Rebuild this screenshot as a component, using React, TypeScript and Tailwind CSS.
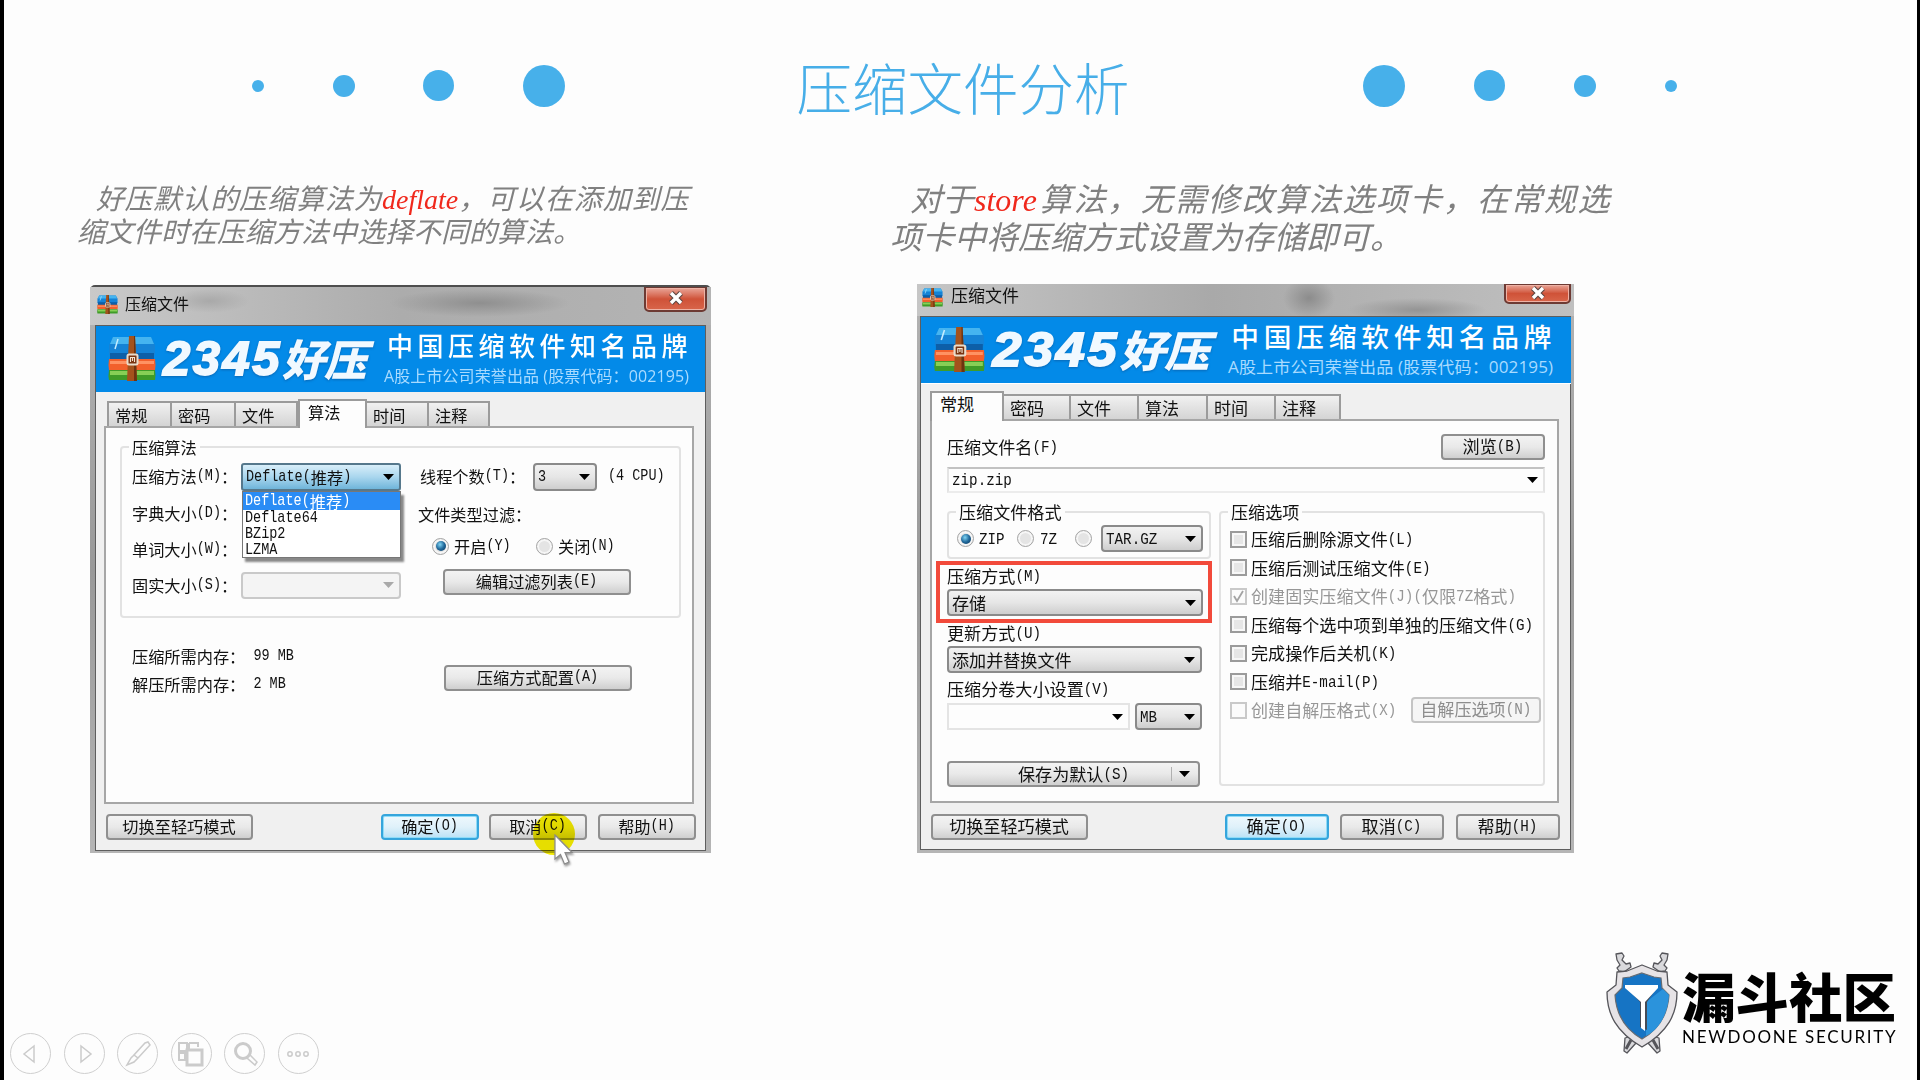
import React from "react";

const CJK = "font-['Liberation_Sans','Noto_Sans_CJK_SC',sans-serif]";

/** Dialog label: full-width glyphs at 1em, half-width glyphs at exactly 0.5em. */
function T({ children, className = "" }: { children: string; className?: string }) {
  const runs = children.match(/[\x20-\x7e]+|[^\x20-\x7e]+/g) ?? [];
  return (
    <span className={`inline-flex shrink-0 items-center whitespace-pre leading-[18px] ${className}`}>
      {runs.map((r, i) =>
        /^[\x20-\x7e]/.test(r) ? (
          <span key={i} className="inline-block scale-y-[1.2] font-['Liberation_Mono',monospace] text-[0.8333em] leading-[18px]">
            {r}
          </span>
        ) : (
          <span key={i} className="font-['Noto_Sans_CJK_SC',sans-serif] leading-[18px]">
            {r}
          </span>
        )
      )}
    </span>
  );
}

function Arrow({ className = "text-black" }: { className?: string }) {
  return (
    <svg className={`h-[6px] w-[11px] shrink-0 ${className}`} viewBox="0 0 11 6">
      <path d="M0 0H11L5.5 6Z" fill="currentColor" />
    </svg>
  );
}

function Btn({ children, className = "", primary = false, disabled = false }: { children: string; className?: string; primary?: boolean; disabled?: boolean }) {
  const look = primary
    ? "border-2 border-[#35a5dc] bg-linear-to-b from-[#eef8fd] via-[#dff1fa] to-[#b9e2f6] shadow-[inset_0_0_0_1px_#8fdcf8]"
    : disabled
      ? "border-2 border-[#c4c4c4] bg-[#f5f5f5] text-[#8d8d8d]"
      : "border-2 border-[#8f8f8f] bg-linear-to-b from-[#f3f3f3] via-[#e9e9e9] to-[#cfcfcf]";
  return (
    <div className={`flex shrink-0 items-center justify-center rounded-[4px] ${look} ${className}`}>
      <T className="-mt-[2px] -ml-[1px]">{children}</T>
    </div>
  );
}

function Combo({ children = "", className = "" }: { children?: string; className?: string }) {
  return (
    <div className={`flex shrink-0 items-center justify-between rounded-[4px] border-2 border-[#8a8a8a] bg-linear-to-b from-[#f2f2f2] via-[#e6e6e6] to-[#cecece] pr-[5px] pl-[3px] ${className}`}>
      <T>{children}</T>
      <Arrow />
    </div>
  );
}

function Radio({ on = false, className = "" }: { on?: boolean; className?: string }) {
  return (
    <span className={`flex size-[17px] shrink-0 items-center justify-center rounded-full border-[1.5px] border-[#a5a5a5] bg-[#e4e4e4] shadow-[inset_0_0_0_2px_#f6f6f6] ${className}`}>
      {on && <span className="size-[10px] rounded-full bg-radial-[at_40%_35%] from-[#7fd4f4] via-[#21699b] to-[#0b3358]" />}
    </span>
  );
}

function Archive({ className }: { className: string }) {
  return (
    <svg className={className} viewBox="0 0 48 45" preserveAspectRatio="none">
      <path d="M5 1H43L47 9V19H1V9Z" fill="#1583d6" />
      <path d="M5 1H43L46 8H2Z" fill="#45b4f0" />
      <path d="M2 17H46V25H2Z" fill="#0d5fa8" />
      <path d="M1 23Q0 29 1 34H47Q48 29 47 23Z" fill="#f2602c" />
      <path d="M2 25H46V28H2Z" fill="#ff9263" />
      <path d="M1 34Q0 40 1 44H47Q48 39 47 34Z" fill="#3f9c28" />
      <path d="M2 35H46V39H2Z" fill="#87cf55" />
      <path d="M21 0H27L29 45H19Z" fill="#a4521c" />
      <path d="M26 0H27L29 45H26Z" fill="#6d3410" />
      <rect x="19.5" y="18.5" width="10" height="10" rx="1.5" fill="#7a3310" stroke="#e9dccb" strokeWidth="2" />
      <path d="M22.500 26V21.500H26.500V26M24.500 21.500V25" stroke="#f3e3cf" strokeWidth="1.100" fill="none" />
      <path d="M10 3L7 13" stroke="#c6ecff" strokeWidth="1.500" />
    </svg>
  );
}

function Banner({ className = "" }: { className?: string }) {
  return (
    <div className={`flex h-[66px] w-[609px] shrink-0 origin-left bg-[#038ae8] ${className}`}>
      <Archive className="mt-[10px] ml-[12px] h-[45px] w-[48px] shrink-0" />
      <div className="mt-[6px] ml-[7px] flex h-[52px] w-[216px] shrink-0 items-center whitespace-nowrap text-[#f1f9ff] italic drop-shadow-[0_1px_1px_#0867b5]">
        <span className="font-['Liberation_Sans',sans-serif] text-[49px] leading-[52px] font-bold tracking-[2.500px] [-webkit-text-stroke:1.8px_#f1f9ff]">2345</span>
        <span className="-mt-[2px] font-['Noto_Sans_CJK_SC',sans-serif] text-[43px] leading-[52px] font-black tracking-[-1px]">好压</span>
      </div>
      <div className="flex shrink-0 flex-col whitespace-nowrap text-white">
        <span className="mt-[2px] ml-[8px] font-['Noto_Sans_CJK_SC',sans-serif] text-[26px] leading-[34px] font-medium tracking-[4.500px]">中国压缩软件知名品牌</span>
        <span className="mt-[4px] ml-[5px] font-['Open_Sans','Noto_Sans_CJK_SC',sans-serif] text-[16px] leading-[20px] tracking-[0.100px] text-[#a9dbff]">A股上市公司荣誉出品 (股票代码：002195)</span>
      </div>
    </div>
  );
}

function Close({ className }: { className: string }) {
  return (
    <div className={`flex items-center justify-center rounded-b-[5px] border-2 border-t border-[#6d3a33] bg-linear-to-b from-[#e8a497] via-[#cf5238] to-[#d8654a] shadow-[inset_0_0_0_1px_#eeb2a5] ${className}`}>
      <svg className="-mt-[2px] h-[14px] w-[16px]" viewBox="0 0 16 14">
        <path d="M3 2L13 12M13 2L3 12" stroke="#5a4541" strokeWidth="5.500" />
        <path d="M3 2L13 12M13 2L3 12" stroke="#fff" strokeWidth="3.400" />
      </svg>
    </div>
  );
}

const tabBase = "flex shrink-0 items-center border-t-2 border-r-2 border-[#9b9b9b] bg-linear-to-b from-[#f1f1f1] to-[#d4d4d4] pl-[6px]";
const tabOn = "relative -mb-[2px] flex shrink-0 items-start border-x-2 border-t-2 border-[#9b9b9b] bg-[#fdfdfd] pt-[2px] pl-[8px]";

function LeftDialog() {
  return (
    <div className="relative mt-[38px] ml-[86px] flex h-[568px] w-[621px] flex-col rounded-t-[5px] border-t-2 border-[#4e4e4e] bg-linear-to-b from-[#b4b4b4] via-[#999] to-[#b5b5b5] text-[16.200px] text-[#111]">
      <div className="flex h-[38px] shrink-0 items-start bg-[radial-gradient(ellipse_90px_14px_at_390px_16px,#8f8f8f,transparent),radial-gradient(ellipse_40px_12px_at_120px_14px,#a9a9a9,transparent),linear-gradient(90deg,#c9c9c9,#acacac_50%,#b4b4b4)] pl-[7px]">
        <Archive className="mt-[8px] h-[19px] w-[21px]" />
        <span className={`mt-[7px] ml-[7px] text-[16px] leading-[22px] ${CJK}`}>压缩文件</span>
        <Close className="mr-[4px] ml-auto h-[25px] w-[63px]" />
      </div>
      <div className="ml-[5px] flex h-[526px] w-[611px] flex-col border border-[#5e5e5e] bg-[#f0f0f0]">
        <Banner />
        <div className="mt-[7px] ml-[11px] flex h-[27px] shrink-0 items-end">
          <div className={`${tabBase} h-[25px] w-[65px] border-l-2`}><T>常规</T></div>
          <div className={`${tabBase} h-[25px] w-[64px]`}><T>密码</T></div>
          <div className={`${tabBase} h-[25px] w-[62px] border-r-0`}><T>文件</T></div>
          <div className={`${tabOn} h-[29px] w-[69px]`}><T>算法</T></div>
          <div className={`${tabBase} h-[25px] w-[62px] pl-[4px]`}><T>时间</T></div>
          <div className={`${tabBase} h-[25px] w-[61px]`}><T>注释</T></div>
        </div>
        <div className="ml-[8px] flex h-[378px] w-[590px] shrink-0 flex-col border-2 border-[#a6a6a6] bg-[#fdfdfd] pt-[10px] pl-[14px]">
          <fieldset className="h-[180px] w-[561px] shrink-0 rounded-[4px] border-2 border-[#e2e2e2]">
            <legend className="ml-[7px] flex h-[18px] items-center px-[3px]"><T>压缩算法</T></legend>
            <div className="flex pt-[1px] pl-[10px]">
              <div className="flex w-[288px] shrink-0 flex-col">
                <div className="relative flex h-[38px] items-center">
                  <T className="w-[109px]">压缩方法(M)：</T>
                  <div className="mt-[2px] flex h-[28px] w-[160px] items-center justify-between rounded-[3px] border-2 border-[#56788c] bg-linear-to-b from-[#d8eef9] via-[#a9d6ee] to-[#6fb5da] pr-[5px] pl-[3px]">
                    <T>Deflate(推荐)</T>
                    <Arrow />
                  </div>
                  <div className="absolute top-[34px] left-[110px] z-10 flex h-[67px] w-[159px] flex-col border border-[#777] bg-white shadow-[3px_4px_2px_#888]">
                    <div className="flex h-[18px] items-center bg-[#2a8cf5] pl-[2px] text-white"><T>Deflate(推荐)</T></div>
                    <div className="flex h-[16px] items-center pl-[2px]"><T>Deflate64</T></div>
                    <div className="flex h-[16px] items-center pl-[2px]"><T>BZip2</T></div>
                    <div className="flex h-[16px] items-center pl-[2px]"><T>LZMA</T></div>
                  </div>
                </div>
                <div className="flex h-[36px] items-center"><T>字典大小(D)：</T></div>
                <div className="flex h-[36px] items-center"><T>单词大小(W)：</T></div>
                <div className="flex h-[36px] items-center">
                  <T className="w-[109px]">固实大小(S)：</T>
                  <div className="flex h-[27px] w-[160px] items-center justify-end rounded-[4px] border-2 border-[#c9c9c9] bg-[#f4f4f4] pr-[5px]">
                    <Arrow className="text-[#a9a9a9]" />
                  </div>
                </div>
              </div>
              <div className="flex flex-col">
                <div className="flex h-[38px] items-center">
                  <T className="w-[113px]">线程个数(T)：</T>
                  <Combo className="mt-[2px] h-[28px] w-[64px]">3</Combo>
                  <T className="ml-[11px]">(4 CPU)</T>
                </div>
                <div className="mt-[9px] -ml-[2px] flex h-[20px] items-center"><T>文件类型过滤：</T></div>
                <div className="mt-[12px] flex h-[20px] items-center pl-[12px]">
                  <Radio on />
                  <T className="ml-[5px] w-[82px]">开启(Y)</T>
                  <Radio />
                  <T className="ml-[5px]">关闭(N)</T>
                </div>
                <Btn className="mt-[13px] ml-[23px] h-[26px] w-[188px]">编辑过滤列表(E)</Btn>
              </div>
            </div>
          </fieldset>
          <div className="flex pt-[29px] pl-[12px]">
            <div className="flex w-[312px] flex-col gap-[10px]">
              <T>压缩所需内存： 99 MB</T>
              <T>解压所需内存： 2 MB</T>
            </div>
            <Btn className="mt-[18px] h-[26px] w-[188px]">压缩方式配置(A)</Btn>
          </div>
        </div>
        <div className="mt-[10px] ml-[10px] flex w-[590px] shrink-0">
          <Btn className="h-[26px] w-[147px]">切换至轻巧模式</Btn>
          <Btn primary className="ml-[128px] h-[26px] w-[98px]">确定(O)</Btn>
          <Btn className="ml-[10px] h-[26px] w-[98px]">取消(C)</Btn>
          <Btn className="ml-[11px] h-[26px] w-[98px]">帮助(H)</Btn>
        </div>
      </div>
      <div className="absolute top-[526px] left-[443px] size-[42px] rounded-full bg-[#f5ec00] mix-blend-multiply" />
      <svg className="absolute top-[547px] left-[464px] h-[32px] w-[21px] drop-shadow-[1px_2px_1px_#999]" viewBox="0 0 21 32">
        <path d="M1 1V25L6.500 20.500L10.500 30L15 28L11 18.500H18Z" fill="#fff" stroke="#8a8a8a" strokeWidth="1.200" />
      </svg>
    </div>
  );
}

const options: { label: string; off?: boolean; checked?: boolean }[] = [
  { label: "压缩后删除源文件(L)" },
  { label: "压缩后测试压缩文件(E)" },
  { label: "创建固实压缩文件(J)(仅限7Z格式)", off: true, checked: true },
  { label: "压缩每个选中项到单独的压缩文件(G)" },
  { label: "完成操作后关机(K)" },
  { label: "压缩并E-mail(P)" },
  { label: "创建自解压格式(X)", off: true },
];

function RightDialog() {
  return (
    <div className="mt-[27px] ml-[25px] flex h-[569px] w-[657px] flex-col bg-linear-to-b from-[#b4b4b4] via-[#999] to-[#b5b5b5] text-[17.100px] text-[#111]">
      <div className="flex h-[32px] shrink-0 items-start bg-[radial-gradient(ellipse_26px_20px_at_392px_14px,#8c8c8c,transparent),radial-gradient(ellipse_70px_12px_at_500px_26px,#949494,transparent),linear-gradient(90deg,#c6c6c6,#a9a9a9_45%,#c0c0c0)] pl-[5px]">
        <Archive className="mt-[4px] h-[19px] w-[21px]" />
        <span className={`mt-[2px] ml-[8px] text-[17px] leading-[22px] ${CJK}`}>压缩文件</span>
        <Close className="mr-[3px] ml-auto h-[20px] w-[67px]" />
      </div>
      <div className="ml-[3px] flex h-[534px] w-[651px] flex-col border border-[#5e5e5e] bg-[#f0f0f0]">
        <Banner className="scale-x-[1.066]" />
        <div className="mt-[10px] ml-[9px] flex h-[26px] shrink-0 items-end">
          <div className={`${tabOn} h-[30px] w-[74px]`}><T>常规</T></div>
          <div className={`${tabBase} h-[25px] w-[67px] pl-[4px]`}><T>密码</T></div>
          <div className={`${tabBase} h-[25px] w-[68px]`}><T>文件</T></div>
          <div className={`${tabBase} h-[25px] w-[69px]`}><T>算法</T></div>
          <div className={`${tabBase} h-[25px] w-[68px]`}><T>时间</T></div>
          <div className={`${tabBase} h-[25px] w-[65px]`}><T>注释</T></div>
        </div>
        <div className="ml-[9px] flex h-[384px] w-[629px] shrink-0 flex-col border-2 border-[#a6a6a6] bg-[#fdfdfd] pt-[13px] pl-[15px]">
          <div className="flex h-[26px] w-[598px] shrink-0 items-center justify-between">
            <T>压缩文件名(F)</T>
            <Btn className="h-[26px] w-[104px]">浏览(B)</Btn>
          </div>
          <div className="mt-[7px] flex h-[26px] w-[598px] shrink-0 items-center justify-between border-2 border-t-[#c2c2c2] border-r-[#e4e4e4] border-b-[#ececec] border-l-[#e4e4e4] pr-[5px] pl-[3px]">
            <T>zip.zip</T>
            <Arrow />
          </div>
          <div className="mt-[10px] flex">
            <div className="flex w-[272px] shrink-0 flex-col">
              <fieldset className="h-[56px] w-[264px] rounded-[4px] border-2 border-[#e2e2e2]">
                <legend className="ml-[7px] flex h-[18px] items-center px-[3px]"><T>压缩文件格式</T></legend>
                <div className="mt-[4px] flex items-center pl-[8px]">
                  <Radio on />
                  <T className="ml-[5px] w-[38px]">ZIP</T>
                  <Radio />
                  <T className="ml-[6px] w-[35px]">7Z</T>
                  <Radio />
                  <Combo className="ml-[9px] h-[27px] w-[102px]">TAR.GZ</Combo>
                </div>
              </fieldset>
              <div className="mt-[2px] -ml-[11px] flex h-[62px] w-[276px] shrink-0 flex-col border-4 border-[#f24a3b] pt-[2px] pl-[7px]">
                <T>压缩方式(M)</T>
                <Combo className="mt-[4px] h-[27px] w-[256px]">存储</Combo>
              </div>
              <T className="mt-[1px]">更新方式(U)</T>
              <Combo className="mt-[4px] h-[27px] w-[255px]">添加并替换文件</Combo>
              <T className="mt-[7px]">压缩分卷大小设置(V)</T>
              <div className="mt-[5px] flex">
                <div className="flex h-[27px] w-[183px] items-center justify-end border-2 border-[#e4e4e4] pr-[5px]"><Arrow /></div>
                <Combo className="ml-[5px] h-[27px] w-[67px]">MB</Combo>
              </div>
              <div className="mt-[31px] flex h-[26px] w-[253px] shrink-0 items-center rounded-[4px] border-2 border-[#8f8f8f] bg-linear-to-b from-[#f3f3f3] via-[#e9e9e9] to-[#cfcfcf] pl-[69px]">
                <T className="w-[153px]">保存为默认(S)</T>
                <span className="mr-[7px] h-[14px] w-px bg-[#b0b0b0]" />
                <Arrow />
              </div>
            </div>
            <fieldset className="h-[283px] w-[326px] rounded-[4px] border-2 border-[#e2e2e2]">
              <legend className="ml-[7px] flex h-[18px] items-center px-[3px]"><T>压缩选项</T></legend>
              <div className="flex flex-col pt-[4px] pl-[9px]">
                {options.map((o, i) => (
                  <div key={o.label} className={`flex h-[28.500px] items-center ${o.off ? "text-[#979797]" : ""}`}>
                    <span className={`mr-[4px] flex size-[17px] shrink-0 items-center justify-center border-2 ${o.off ? "border-[#c9c9c9] bg-[#fbfbfb]" : "border-[#9b9b9b] bg-[#e6e6e6] shadow-[inset_0_0_0_2px_#f7f7f7]"}`}>
                      {o.checked && (
                        <svg className="size-[13px]" viewBox="0 0 13 13">
                          <path d="M2 6L5 11L11 1" fill="none" stroke="#a3a3a3" strokeWidth="1.800" />
                        </svg>
                      )}
                    </span>
                    <T>{o.label}</T>
                    {i === 6 && <Btn disabled className="ml-[15px] h-[26px] w-[130px]">自解压选项(N)</Btn>}
                  </div>
                ))}
              </div>
            </fieldset>
          </div>
        </div>
        <div className="mt-[11px] ml-[10px] flex shrink-0">
          <Btn className="h-[26px] w-[157px]">切换至轻巧模式</Btn>
          <Btn primary className="ml-[137px] h-[26px] w-[104px]">确定(O)</Btn>
          <Btn className="ml-[11px] h-[26px] w-[104px]">取消(C)</Btn>
          <Btn className="ml-[12px] h-[26px] w-[104px]">帮助(H)</Btn>
        </div>
      </div>
    </div>
  );
}

function Dots({ className }: { className: string }) {
  return (
    <div className={`flex items-center ${className}`}>
      <span className="size-[12px] rounded-full bg-[#47b0ea]" />
      <span className="size-[22px] rounded-full bg-[#47b0ea]" />
      <span className="size-[31px] rounded-full bg-[#47b0ea]" />
      <span className="size-[42px] rounded-full bg-[#47b0ea]" />
    </div>
  );
}

function Shield() {
  return (
    <svg className="h-[102px] w-[74px] shrink-0" viewBox="0 0 74 102">
      <g fill="#d9d9dc" stroke="#55555a" strokeWidth="1.300" strokeLinejoin="round">
        <path d="M11 2L17 1L19 4L17 8L21 12L25 11L26 15L19 20L14 19L12 16L15 13L12 8Z" />
        <path d="M63 2L57 1L55 4L57 8L53 12L49 11L48 15L55 20L60 19L62 16L59 13L62 8Z" />
        <path d="M20 86L19 99L22 101L31 91L27 84Z" />
        <path d="M54 86L55 99L52 101L43 91L47 84Z" />
        <path d="M21 97L26 88M53 97L48 88" strokeWidth="3" />
        <path d="M37 13L52 19L62 20L63 33L72 40C72 62 63 80 37 95C11 80 2 62 2 40L11 33L12 20L22 19Z" fill="#e6e3e6" />
      </g>
      <path d="M37 21L49 25L56 26L57 36L64 43C63 60 56 76 37 87C18 76 11 60 10 43L17 36L18 26L25 25Z" fill="#1674c4" stroke="#666b72" strokeWidth="1.200" />
      <path d="M41 50L58 37L64 43C63 60 56 76 41 84Z" fill="#2b93dc" />
      <path d="M20 34H53L42 50V78L35 75V50Z" fill="#454c57" />
      <path d="M20 33H53V36L40 50V79L36 76V50L20 36Z" fill="#fff" />
    </svg>
  );
}

function NavButton({ children }: { children: React.ReactNode }) {
  return (
    <span className="flex size-[41px] items-center justify-center rounded-full border-[1.500px] border-[#cfcfcf] text-[#cbcbcb]">
      <svg className="size-[32px]" viewBox="0 0 32 32" fill="none" stroke="currentColor" strokeWidth="1.500">
        {children}
      </svg>
    </span>
  );
}

export default function App() {
  return (
    <div className="flex h-[1080px] w-[1920px] flex-col overflow-hidden border-r-[3px] border-l-[4px] border-black bg-[#fdfdfd]">
      <header className="flex h-[171px] shrink-0 items-center pl-[248px]">
        <Dots className="gap-[68.500px]" />
        <h1 className="ml-[232px] w-[566px] font-['Noto_Sans_CJK_SC',sans-serif] text-[55.500px] leading-[60px] font-light whitespace-nowrap text-[#47aee8]">压缩文件分析</h1>
        <Dots className="flex-row-reverse gap-[69px]" />
      </header>
      <main className="flex h-[740px] shrink-0">
        <section className="w-[888px] shrink-0">
          <p className={`mt-[12px] ml-[73px] h-[64px] text-[28px] leading-[33px] whitespace-nowrap text-[#808080] italic ${CJK}`}>
            <span className="ml-[19px] tracking-[0.600px]">好压默认的压缩算法为</span>
            <span className="font-['Liberation_Serif',serif] text-[28px] text-[#f0281c]">deflate</span>
            <span className="tracking-[0.900px]">，可以在添加到压</span>
            <br />
            <span>缩文件时在压缩方法中选择不同的算法。</span>
          </p>
          <LeftDialog />
        </section>
        <section>
          <p className={`mt-[10px] -ml-[2px] h-[76px] text-[32px] leading-[38px] whitespace-nowrap text-[#808080] italic ${CJK}`}>
            <span className="ml-[20px]">对于</span>
            <span className="font-['Liberation_Serif',serif] text-[#f0281c]">store</span>
            <span className="ml-[3px] tracking-[1.600px]">算法，无需修改算法选项卡，在常规选</span>
            <br />
            <span>项卡中将压缩方式设置为存储即可。</span>
          </p>
          <RightDialog />
        </section>
      </main>
      <footer className="flex h-[169px] items-start justify-between pl-[6px]">
        <nav className="mt-[122px] flex gap-[12.500px]">
          <NavButton><path d="M19 8V24L9 16Z" /></NavButton>
          <NavButton><path d="M13 8V24L23 16Z" /></NavButton>
          <NavButton>
            <path d="M26 4L28 7L16 20L12 17L23 5ZM12 17L9 20L5 27L12 24L16 20" />
          </NavButton>
          <NavButton>
            <path d="M4 5H12V13H4ZM14 5H23V9M14 5V11M4 15H10V22H4Z" strokeWidth="2" />
            <path d="M12 12H27V27H12Z" strokeWidth="3" />
          </NavButton>
          <NavButton>
            <circle cx="14" cy="13" r="7.500" strokeWidth="3" />
            <path d="M19 18L21 17L28 24L26 27L18 20Z" />
          </NavButton>
          <NavButton>
            <circle cx="8" cy="16" r="2.200" /><circle cx="16" cy="16" r="2.200" /><circle cx="24" cy="16" r="2.200" />
          </NavButton>
        </nav>
        <div className="mt-[41px] mr-[18px] flex w-[294px] gap-[3px]">
          <Shield />
          <div className="flex flex-col whitespace-nowrap text-black">
            <span className="mt-[15px] font-['Noto_Sans_CJK_SC',sans-serif] text-[53.500px] leading-[56px] font-black">漏斗社区</span>
            <span className="mt-[3px] font-['Lato',sans-serif] text-[17px] leading-[22px] tracking-[1.700px]">NEWDOONE SECURITY</span>
          </div>
        </div>
      </footer>
    </div>
  );
}
